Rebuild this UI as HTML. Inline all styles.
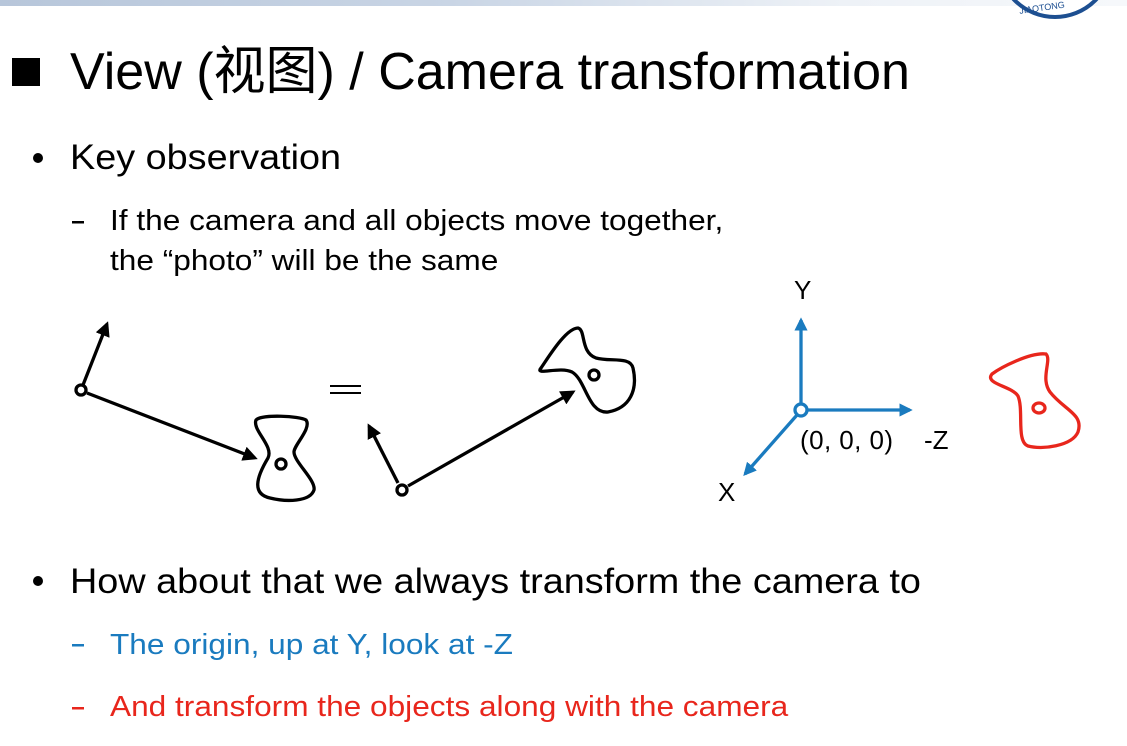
<!DOCTYPE html>
<html><head><meta charset="utf-8"><style>
body{margin:0;width:1127px;height:746px;background:#fff;position:relative;overflow:hidden;font-family:"Liberation Sans","Noto Sans CJK SC",sans-serif;color:#000}
.t{position:absolute;white-space:nowrap;line-height:1;transform-origin:0 0}
.b{font-size:35px;transform:scaleX(1.08)}
.s{font-size:29px;transform:scaleX(1.09)}
</style></head><body>
<div style="position:absolute;left:0;top:0;width:1127px;height:6px;background:linear-gradient(90deg,#b7c6da 0%,#c9d5e5 40%,#eef2f7 75%,#f6f8fb 100%)"></div>
<svg style="position:absolute;left:0;top:0" width="1127" height="746">
<circle cx="1055" cy="-40" r="57" fill="#fff" stroke="#1d4f91" stroke-width="4"/>
<text x="1019" y="11" font-size="9" fill="#1d4f91" font-family="Liberation Sans" transform="rotate(-8 1040 8)">JIAOTONG</text>
<rect x="12" y="58" width="28" height="28" fill="#000"/>
<circle cx="38" cy="158" r="5"/>
<circle cx="38" cy="581" r="5"/>
<rect x="72" y="221" width="12" height="2.5"/>
<rect x="72" y="644" width="12" height="2.5" fill="#1a7bbf"/>
<rect x="72" y="707" width="12" height="2.5" fill="#e8261c"/>
<defs>
<marker id="a" viewBox="0 0 10 10" refX="8" refY="5" markerWidth="4.5" markerHeight="4.5" orient="auto"><path d="M0,0L10,5L0,10z" fill="#000"/></marker>
<marker id="b" viewBox="0 0 10 10" refX="8" refY="5" markerWidth="4" markerHeight="4" orient="auto"><path d="M0,0L10,5L0,10z" fill="#1a7bbf"/></marker>
</defs>
<g fill="none" stroke="#000" stroke-width="3.3">
<line x1="83" y1="385" x2="107" y2="324" marker-end="url(#a)"/>
<line x1="87" y1="393" x2="255" y2="458" marker-end="url(#a)"/>
<circle cx="81" cy="390" r="5" fill="#fff"/>
<path d="M256,420C262,414 300,416 306,420C312,428 294,445 294,452C294,462 316,480 314,490C310,502 286,502 270,498C252,494 256,478 268,458C274,446 252,430 256,420Z"/>
<circle cx="281" cy="464" r="5"/>
<line x1="398" y1="483" x2="369" y2="426" marker-end="url(#a)"/>
<line x1="408" y1="486" x2="573" y2="392" marker-end="url(#a)"/>
<circle cx="402" cy="490" r="5" fill="#fff"/>
<path d="M541,368C548,358 566,328 578,328C586,330 580,352 596,358C610,362 630,356 633,368C638,390 630,408 608,412C588,414 586,380 572,372C560,366 534,376 541,368Z"/>
<circle cx="594" cy="375" r="5"/>
</g>
<g stroke="#000" stroke-width="2"><line x1="330" y1="386" x2="361" y2="386"/><line x1="330" y1="393" x2="361" y2="393"/></g>
<g fill="none" stroke="#1a7bbf" stroke-width="3.3">
<line x1="801" y1="404" x2="801" y2="320" marker-end="url(#b)"/>
<line x1="807" y1="410" x2="910" y2="410" marker-end="url(#b)"/>
<line x1="797" y1="415" x2="745" y2="474" marker-end="url(#b)"/>
<circle cx="801" cy="410" r="6" fill="#fff"/>
</g>
<g fill="none" stroke="#e8261c" stroke-width="3.3">
<path d="M992,374C1000,368 1030,352 1046,354C1052,360 1040,378 1050,392C1064,410 1084,414 1078,432C1072,446 1042,450 1028,446C1016,442 1024,410 1018,396C1012,386 984,384 992,374Z"/>
<ellipse cx="1039" cy="408" rx="6" ry="5"/>
</g>
<g font-family="Liberation Sans" font-size="26" fill="#000">
<text x="794" y="299">Y</text>
<text x="718" y="501">X</text>
<text x="800" y="449" textLength="93">(0, 0, 0)</text>
<text x="924" y="449">-Z</text>
</g>
</svg>
<div class="t" style="left:70px;top:46px;font-size:52px">View (视图) / Camera transformation</div>
<div class="t b" style="left:70px;top:140px">Key observation</div>
<div class="t s" style="left:110px;top:207px">If the camera and all objects move together,</div>
<div class="t s" style="left:110px;top:247px">the “photo” will be the same</div>
<div class="t b" style="left:70px;top:564px">How about that we always transform the camera to</div>
<div class="t s" style="left:110px;top:631px;color:#1a7bbf">The origin, up at Y, look at -Z</div>
<div class="t s" style="left:110px;top:693px;color:#e8261c">And transform the objects along with the camera</div>
</body></html>
